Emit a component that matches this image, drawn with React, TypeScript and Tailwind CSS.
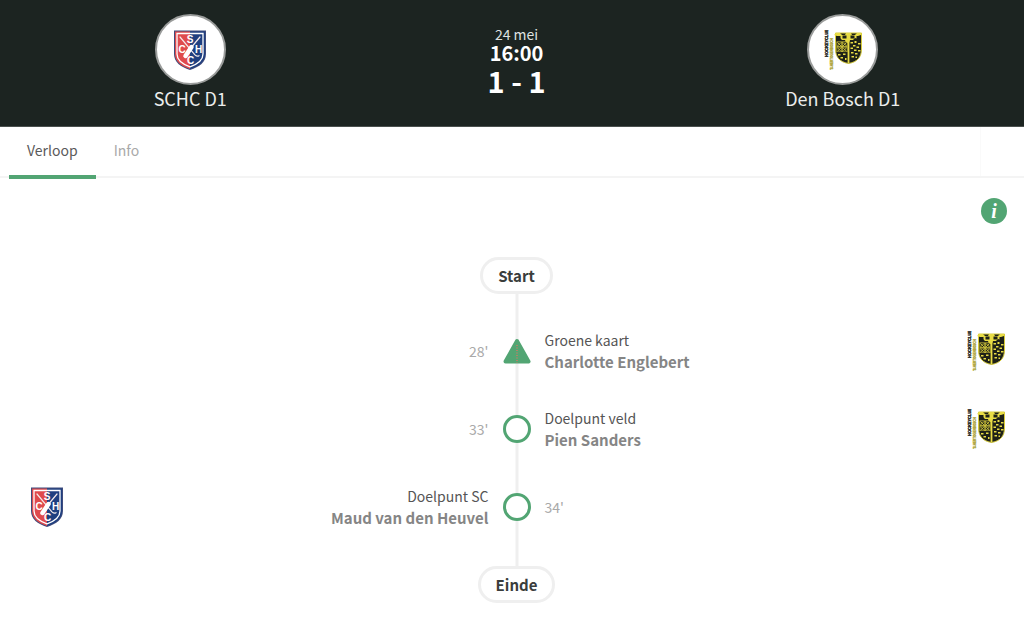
import type { ReactNode } from 'react'

type Side = 'home' | 'away'

interface MatchEvent {
  minute: string
  title: string
  player: string
  side: Side
  kind: 'card' | 'goal'
}

const events: MatchEvent[] = [
  { minute: "28'", title: 'Groene kaart', player: 'Charlotte Englebert', side: 'away', kind: 'card' },
  { minute: "33'", title: 'Doelpunt veld', player: 'Pien Sanders', side: 'away', kind: 'goal' },
  { minute: "34'", title: 'Doelpunt SC', player: 'Maud van den Heuvel', side: 'home', kind: 'goal' },
]

function SchcCrest({ className = '' }: { className?: string }) {
  return (
    <svg viewBox="0 0 32 40" className={className} role="img" aria-label="SCHC">
      <path d="M0 .5h32V24c0 8-6.500 13-16 16C6.500 37 0 32 0 24Z" fill="#3f4c7c" />
      <path d="M1 1.500h15V39C7 36 1 31.500 1 24Z" fill="#df4a4d" />
      <path d="M16 1.500h15V24c0 7.500-6 12-15 15Z" fill="#1f3f80" />
      <path d="M3 3.500h26V24c0 6-5 10-13 12.800C8 34 3 30 3 24Z" fill="none" stroke="#fff" strokeWidth="1.300" />
      <path d="M6 7 19 22.500c2 3 4 4.500 6 3.200M26 7 16 19" fill="none" stroke="#f3e9ea" strokeWidth="1.200" strokeLinecap="round" />
      <path d="m17.500 17-6 9" stroke="#fff" strokeWidth="4.500" strokeLinecap="round" />
      <g fill="#fff" fontFamily="Liberation Sans, sans-serif" fontWeight="700" fontSize="10" textAnchor="middle">
        <text x="16" y="12.500">S</text>
        <text x="8" y="22.500">C</text>
        <text x="24.500" y="22.500">H</text>
        <text x="16.500" y="34">C</text>
      </g>
    </svg>
  )
}

function DenBoschCrest({ className = '' }: { className?: string }) {
  return (
    <svg viewBox="0 0 40 40" className={className} role="img" aria-label="Den Bosch">
      <g fontFamily="Liberation Sans, sans-serif" fontWeight="700">
        <text transform="translate(5 27) rotate(-90)" fontSize="4" fill="#22221a" stroke="#22221a" strokeWidth=".4">HOCKEYCLUB</text>
        <text transform="translate(10 40) rotate(-90)" fontSize="3" fill="#8c8526" stroke="#b3a92f" strokeWidth=".3">’S-HERTOGENBOSCH</text>
      </g>
      <path d="M12.500 3h26v16c0 8-4 13-13 14.500C16.500 32 12.500 27 12.500 19Z" fill="#1e2118" stroke="#d6cb3c" strokeWidth="1" />
      <path d="M13 3h4l2 2h3l1-2h5l1 2h3l2-2h4v2l-3 1v3l-3-1-2 2h-3l-1 3h-3l-1-3h-3l-2-2-3 1V6l-3-1Z" fill="#e8dc45" />
      <path d="M14 6h3.500v3H14zM33.500 6H37v3h-3.500zM19.500 5.500h4v3h-4zM27.500 5.500h4v3h-4z" fill="#1e2118" />
      <path d="M25.500 8v25" stroke="#e8dc45" strokeWidth="1.800" />
      <path d="M13.500 11.500h11v10.500h-11z" fill="#d6cb3c" />
      <path d="M14.200 12.300h4.200v4h-4.200zM19.700 12.300h4.200v4h-4.200zM14.200 17.500h4.200v4h-4.200zM19.700 17.500h4.200v4h-4.200z" fill="#1e2118" />
      <path d="m14.500 12.500 3.500 3.500m0-3.500L14.500 16M20 12.500l3.500 3.500m0-3.500L20 16M14.500 17.800l3.500 3.500m0-3.500-3.500 3.500M20 17.800l3.500 3.500m0-3.500L20 21.300" stroke="#d6cb3c" strokeWidth=".9" />
      <path d="M27.500 12h2.500v1.500h-2.500zM31.500 11h2v2h-2zM35 13h2.500v1.500H35zM30 15h2.500v1.500H30zM33.500 16.500H36V18h-2.500zM27.500 17.500H30V19h-2.500zM31 19.500h2.500V21H31zM35 20h2.500v1.500H35zM28 22h2.500v1.500H28zM32 23h2.500v1.500H32zM28.500 26H31v1.500h-2.500zM32.500 26.500H34V28h-1.500zM15 24h2.500v1.500H15zM20 23.500h2.500V25H20zM17.500 27H20v1.500h-2.500zM22 28h1.500v2H22z" fill="#e8dc45" />
    </svg>
  )
}

function Crest({ side, className }: { side: Side; className?: string }) {
  return side === 'home' ? <SchcCrest className={className} /> : <DenBoschCrest className={className} />
}

function Team({ name, children }: { name: string; children: ReactNode }) {
  return (
    <div className="flex flex-col items-center">
      <div className="flex size-[71px] items-center justify-center rounded-full border-2 border-[#9a9c9b] bg-white">
        {children}
      </div>
      <span className="text-lg leading-[27px] text-[#ebedec]">{name}</span>
    </div>
  )
}

function EventIcon({ kind }: { kind: MatchEvent['kind'] }) {
  if (kind === 'goal') {
    return <span className="size-7 rounded-full border-3 border-[#52a573] bg-white" />
  }
  return (
    <svg viewBox="0 0 28 28" className="size-7" aria-hidden="true">
      <path d="M14 4 25.500 24.500H2.500Z" fill="#52a573" stroke="#52a573" strokeWidth="4" strokeLinejoin="round" />
      <path d="M14 8v18" stroke="#b08468" strokeWidth="2" strokeDasharray="1 1.500" />
    </svg>
  )
}

function EventRow({ event }: { event: MatchEvent }) {
  const isHome = event.side === 'home'
  const minute = <span className="text-[#a9a9a9]">{event.minute}</span>
  const details = (
    <div>
      <p className="text-[#555]">{event.title}</p>
      <p className="text-[15px] leading-[21px] font-bold text-[#858585]">{event.player}</p>
    </div>
  )

  return (
    <li className="relative grid h-[78px] grid-cols-[1fr_28px_1fr] items-center gap-x-3.5 text-sm leading-[21px]">
      <div className="flex items-center justify-between pl-[22px] text-right">
        {isHome && <Crest side="home" className="h-10 w-8" />}
        <div className="ml-auto">{isHome ? details : minute}</div>
      </div>
      <EventIcon kind={event.kind} />
      <div className="flex items-center justify-between pr-[18px]">
        {isHome ? minute : details}
        {!isHome && <Crest side="away" className="size-10" />}
      </div>
    </li>
  )
}

function Pill({ children }: { children: ReactNode }) {
  return (
    <div className="relative rounded-full border-3 border-[#efefef] bg-white px-[15px] py-1 text-[15px] leading-[23px] font-bold text-[#3a3d3c]">
      {children}
    </div>
  )
}

export default function App() {
  return (
    <div className="min-h-screen bg-white font-['Noto_Sans_CJK_SC',sans-serif]">
      {/* Scoreboard */}
      <header className="grid grid-cols-[5fr_4fr_5fr] border-b border-[#4a504e] bg-[#1c2421] py-3.5 pl-[9px]">
        <Team name="SCHC D1">
          <SchcCrest className="h-10 w-8" />
        </Team>
        <div className="flex flex-col items-center pt-[11px] text-white">
          <span className="text-sm leading-[18px] text-[#dfe1e0]">24 mei</span>
          <span className="text-xl leading-5 font-bold">16:00</span>
          <span className="text-[29px] leading-[34px] font-bold">1 - 1</span>
        </div>
        <Team name="Den Bosch D1">
          <DenBoschCrest className="size-10" />
        </Team>
      </header>

      {/* Tabs */}
      <nav className="flex items-start justify-between border-b-2 border-[#f4f4f4] pl-[9px]">
        <div className="-mb-[3px] flex">
          <a href="#verloop" aria-current="page" className="border-b-4 border-[#52a573] px-[18px] pt-[11px] pb-[13px] text-sm leading-6 text-[#5a5a5a]">
            Verloop
          </a>
          <a href="#info" className="px-[18px] pt-[11px] text-sm leading-6 text-[#a9a9a9]">
            Info
          </a>
        </div>
        <div className="w-11 self-stretch border-l border-[#fafafa]" />
      </nav>

      <main className="pl-[9px]">
        <div className="flex justify-end pt-5 pr-[17px]">
          <button
            type="button"
            aria-label="Uitleg"
            className="flex size-[26px] items-center justify-center rounded-full bg-[#52a573] font-['Liberation_Serif',serif] text-xl leading-none font-bold text-white italic"
          >
            i
          </button>
        </div>

        {/* Timeline */}
        <div className="relative mt-[33px] flex flex-col items-center">
          <div className="absolute inset-y-4 left-1/2 w-[3px] -translate-x-1/2 bg-[#efefef]" />
          <Pill>Start</Pill>
          <ol className="w-full pt-[18px] pb-5">
            {events.map((event) => (
              <EventRow key={event.minute} event={event} />
            ))}
          </ol>
          <Pill>Einde</Pill>
        </div>
      </main>
    </div>
  )
}
